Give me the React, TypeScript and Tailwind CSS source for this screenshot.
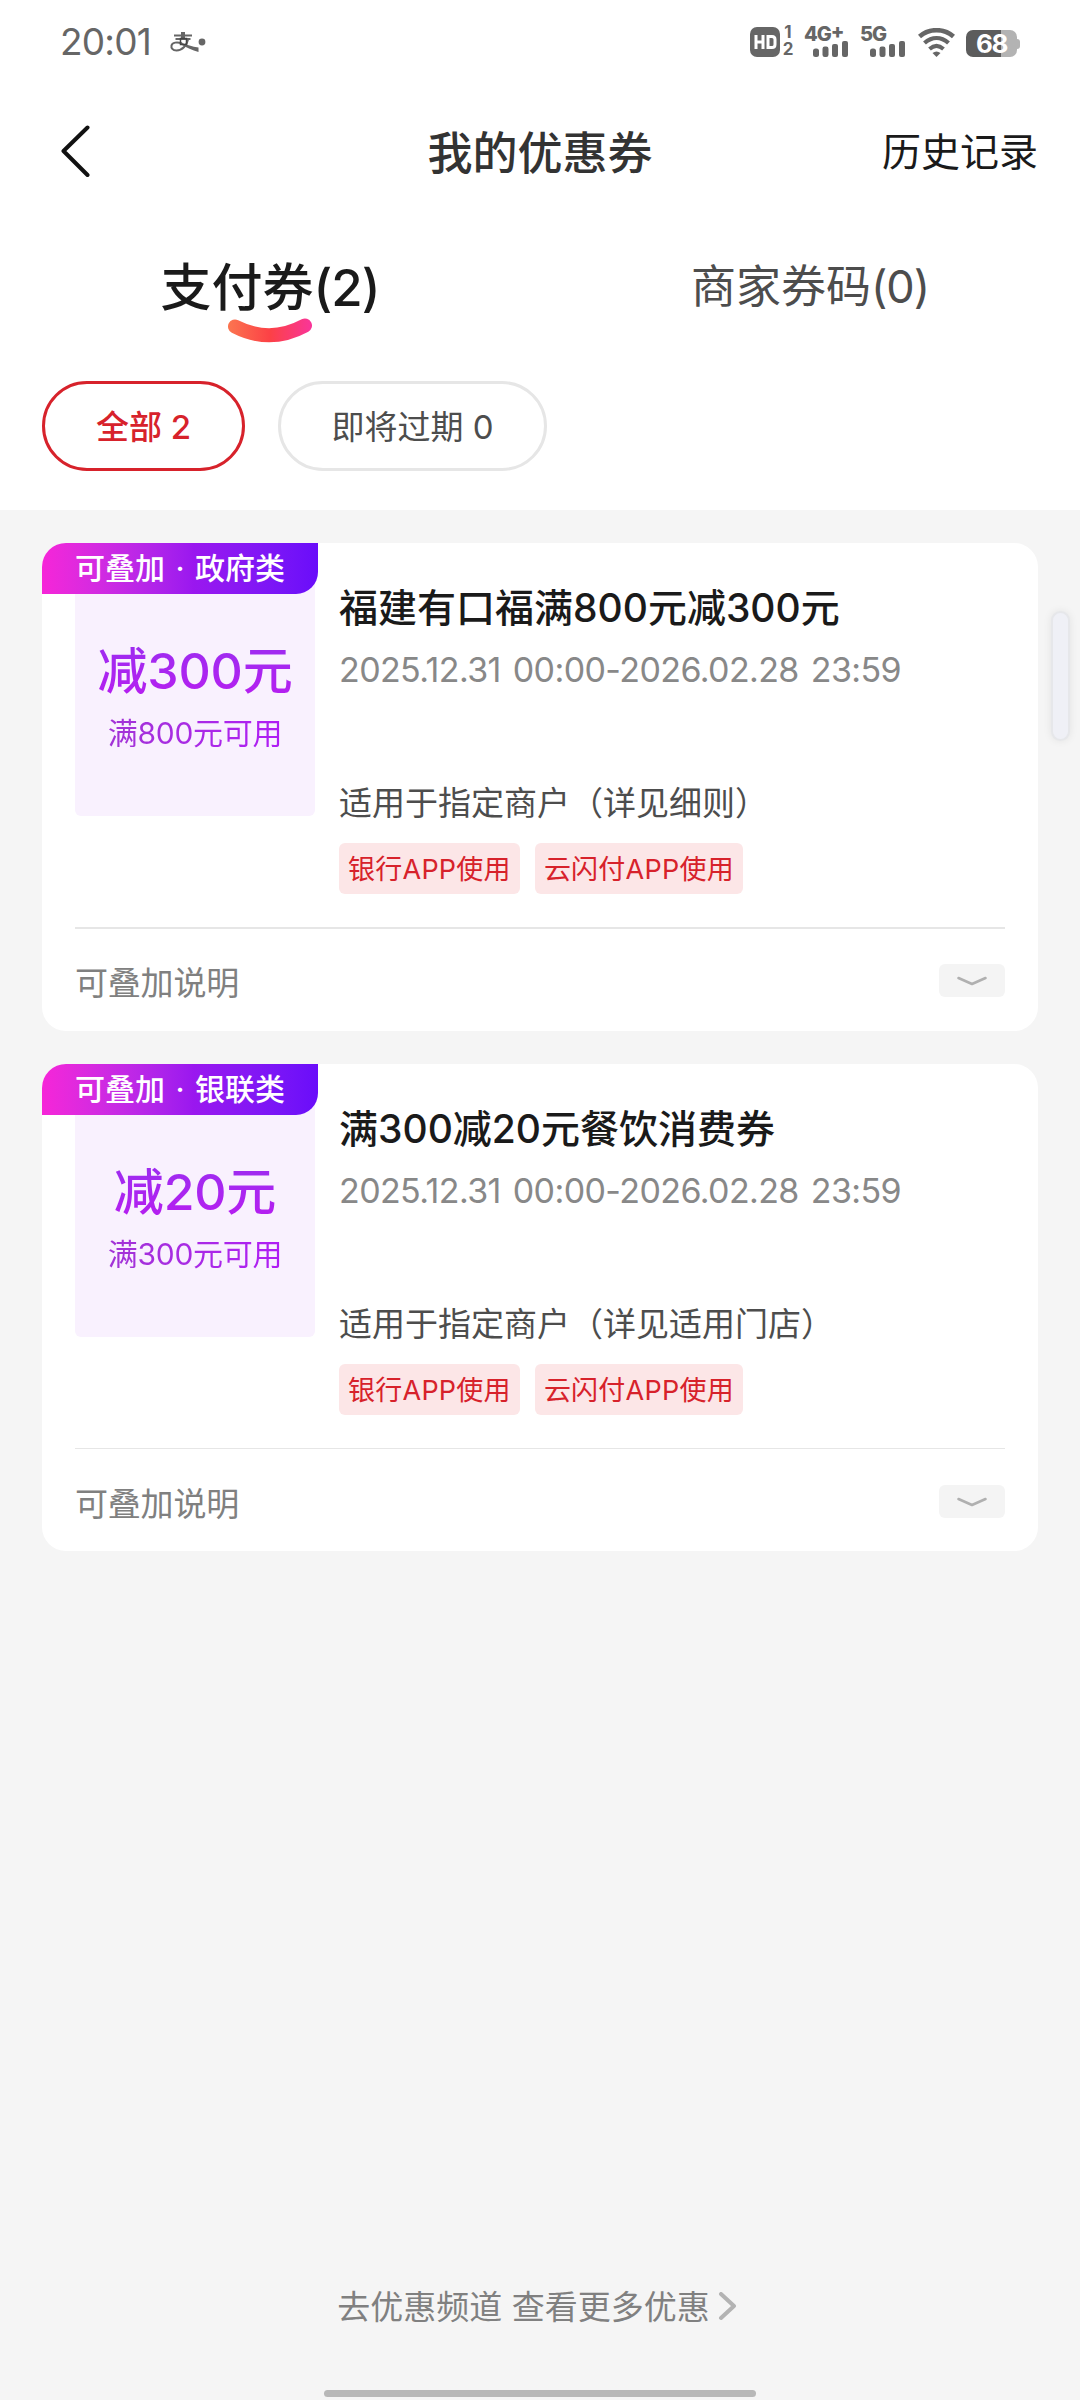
import { useState } from "react";
import clsx from "clsx";

type Coupon = {
  id: number;
  badge: string;
  amount: string;
  condition: string;
  title: string;
  period: string;
  scope: string;
  tags: string[];
};

const coupons: Coupon[] = [
  {
    id: 1,
    badge: "政府类",
    amount: "减300元",
    condition: "满800元可用",
    title: "福建有口福满800元减300元",
    period: "2025.12.31 00:00-2026.02.28 23:59",
    scope: "适用于指定商户（详见细则）",
    tags: ["银行APP使用", "云闪付APP使用"],
  },
  {
    id: 2,
    badge: "银联类",
    amount: "减20元",
    condition: "满300元可用",
    title: "满300减20元餐饮消费券",
    period: "2025.12.31 00:00-2026.02.28 23:59",
    scope: "适用于指定商户（详见适用门店）",
    tags: ["银行APP使用", "云闪付APP使用"],
  },
];

function SignalBars() {
  return (
    <svg className="block w-[35px] h-4" viewBox="0 0 35 16" fill="#666">
      <rect x="0" y="7.5" width="6" height="8.5" rx="2.5" />
      <rect x="9.5" y="5.5" width="6" height="10.5" rx="2.2" />
      <rect x="19" y="3" width="6" height="13" rx="2" />
      <rect x="29" y="0" width="6" height="16" rx="2" />
    </svg>
  );
}

function StatusBar() {
  return (
    <div className="h-[84px] px-[60px] flex items-start justify-between text-[#666]">
      <div className="flex items-start">
        <span className="mt-[22px] text-[37px] leading-10 tracking-[-0.8px] w-[92px]">20:01</span>
        <svg className="ml-[18px] mt-[30px] w-9 h-6" viewBox="0 0 36 24" fill="none" stroke="#666">
          <path d="M4 5.500h18M5.500 9h15" strokeWidth="1.800" />
          <path d="M13 2v8" strokeWidth="4" />
          <path
            d="M18 9.500C17 15 12.500 20.500 6.500 20.500C2.500 20.500 1 18 1.500 15.500C2.200 12.500 7 11.500 12 13.500"
            strokeWidth="2"
          />
          <path d="M11 12.500C17 15 22 16.500 28.500 17.500V22C22 20 17 18 11 14.500Z" fill="#666" stroke="none" />
          <path d="M10.500 8.500h6v6h-6z" stroke="#444" strokeWidth="1.500" />
          <circle cx="32" cy="12" r="3.400" fill="#666" stroke="none" />
        </svg>
      </div>
      <div className="flex items-start">
        <div className="mt-[27px] w-[30px] h-[30px] rounded-[7px] bg-[#666] flex items-center justify-center">
          <svg className="w-6 h-4" viewBox="0 0 24 16" fill="none" stroke="#fff" strokeWidth="3">
            <path d="M3 1v14M10 1v14M3 8h7" />
            <path d="M15 2.500h4q3 0 3 3v5q0 3-3 3h-4z" />
          </svg>
        </div>
        <div className="mt-[26px] ml-[2px] w-3 flex flex-col items-center text-[17px] leading-[13px] font-bold">
          <span>1</span>
          <span className="mt-[4px]">2</span>
        </div>
        <div className="ml-[10px] mt-[25px] w-[44px] flex flex-col items-end">
          <span className="w-full text-[20px] leading-[18px] h-4 font-extrabold tracking-[-1px] whitespace-nowrap">
            4G<span className="relative -top-[3px]">+</span>
          </span>
          <SignalBars />
        </div>
        <div className="ml-3 mt-[25px] w-[45px] flex flex-col items-end">
          <span className="w-full text-[20px] leading-[18px] h-4 font-extrabold tracking-[-1px]">5G</span>
          <SignalBars />
        </div>
        <svg className="ml-[13px] mt-[28px] w-[37px] h-[29px]" viewBox="0 0 37 29" fill="none" stroke="#666">
          <path d="M1.500 8.500C11 0 26 0 35.500 8.500" strokeWidth="4.500" />
          <path d="M6.500 15C14 8.500 23 8.500 30.500 15" strokeWidth="4.300" />
          <path d="M11.500 21C16 17 21 17 25.500 21" strokeWidth="4" />
          <path d="M14.500 25Q18.500 22 22.500 25L18.500 29z" fill="#666" stroke="none" />
        </svg>
        <div className="ml-[11px] mt-[30px] flex items-center">
          <div className="w-[51px] h-[27px] rounded-[7px] bg-linear-to-r from-[#5c5c5c] from-68% to-[#b3b3b3] to-68% text-white text-[26px] leading-7 font-bold tracking-[-1.5px] text-center">
            68
          </div>
          <div className="w-[3px] h-[10px] rounded-r-[3px] bg-[#b3b3b3]" />
        </div>
      </div>
    </div>
  );
}

function CouponCard({ coupon }: { coupon: Coupon }) {
  return (
    <div className="group relative h-[488px] last:h-[487px] rounded-[24px] bg-white overflow-hidden px-[33px]">
      <div className="absolute left-0 top-0 w-[276px] h-[51px] pl-[33px] rounded-br-[22px] bg-linear-to-r from-[#f625d8] via-[#9a17ef] via-55% to-[#6a0cfa] text-white text-[30px] leading-[51px] font-medium whitespace-nowrap">
        可叠加<span className="inline-block w-[30px] text-center">·</span>
        {coupon.badge}
      </div>

      <div className="flex h-[384px]">
        <div className="mt-[33px] w-60 h-60 rounded-[6px] bg-[#f9f1fe] flex flex-col items-center whitespace-nowrap">
          <div className="mt-[65px] text-[50px] leading-[60px] tracking-[-0.2px] font-medium text-transparent bg-clip-text bg-linear-to-b from-[#9b2cf0] to-[#b81cf0]">
            {coupon.amount}
          </div>
          <div className="mt-[12px] text-[30px] leading-10 tracking-[-0.3px] text-transparent bg-clip-text bg-linear-to-r from-[#a233d6] to-[#b01cf5]">
            {coupon.condition}
          </div>
        </div>

        <div className="ml-6 flex-1 whitespace-nowrap">
          <h2 className="mt-[39px] text-[39px] leading-[52px] font-medium text-[#1a1a1a]">{coupon.title}</h2>
          <p className="mt-[14px] text-[34px] leading-11 tracking-[-0.6px] [word-spacing:3px] text-[#888]">
            {coupon.period}
          </p>
          <p className="mt-[89px] text-[33px] leading-11 text-[#4d4d4d]">{coupon.scope}</p>
          <div className="mt-[18px] flex gap-[15px]">
            {coupon.tags.map((tag) => (
              <span
                key={tag}
                className="h-[51px] px-[9px] rounded-[6px] bg-[#fce6e7] text-[27px] leading-[54px] tracking-[0.25px] text-[#d7222b]"
              >
                {tag}
              </span>
            ))}
          </div>
        </div>
      </div>

      <div className="border-t-2 group-last:border-t group-last:pt-px border-[#e6e6e6] h-[104px] flex justify-between">
        <span className="mt-[32px] text-[33px] leading-11 tracking-[-0.2px] text-[#808080]">可叠加说明</span>
        <button className="mt-[35px] w-[66px] h-[33px] rounded-[6px] bg-[#f4f4f4] flex items-center justify-center">
          <svg className="w-[30px] h-[10px]" viewBox="0 0 30 10" fill="none" stroke="#b0b0b0" strokeWidth="2.500">
            <path d="M1.500 2L15 8L28.500 2" strokeLinecap="round" strokeLinejoin="round" />
          </svg>
        </button>
      </div>
    </div>
  );
}

export default function App() {
  const [filter, setFilter] = useState("all");

  return (
    <div className="relative w-[1080px] h-[2400px] overflow-hidden flex flex-col bg-[#f5f5f5] font-[Inter,'Noto_Sans_CJK_SC',sans-serif]">
      <div className="h-[510px] bg-white">
        <StatusBar />

        <header className="h-[136px] px-[42px] flex items-center justify-between">
          <div className="w-[156px] pl-[18px]">
            <svg className="w-[32px] h-[54px]" viewBox="0 0 32 54" fill="none" stroke="#111" strokeWidth="4">
              <path d="M27.500 2.500L3.500 26L27.500 50" strokeLinecap="round" strokeLinejoin="round" />
            </svg>
          </div>
          <h1 className="mt-[3px] text-[45px] leading-[60px] font-medium text-[#333]">我的优惠券</h1>
          <span className="text-[39px] leading-[52px] text-[#1a1a1a]">历史记录</span>
        </header>

        {/* Tabs */}
        <div className="h-[161px] flex">
          <div className="w-1/2 flex flex-col items-center">
            <span className="mt-[33px] text-[51px] leading-[70px] font-medium text-[#1a1a1a]">
              支付券<span className="tracking-[-1px]">(2)</span>
            </span>
            <svg className="-mt-[5px] w-[84px] h-[25px]" viewBox="0 0 84 25" fill="none">
              <defs>
                <linearGradient id="smile" x1="0" y1="0" x2="84" y2="0" gradientUnits="userSpaceOnUse">
                  <stop stopColor="#fb7550" />
                  <stop offset="0.500" stopColor="#fc4146" />
                  <stop offset="1" stopColor="#f9359a" />
                </linearGradient>
              </defs>
              <path d="M7 8.500Q42 26.500 77 7.500" stroke="url(#smile)" strokeWidth="14" strokeLinecap="round" />
            </svg>
          </div>
          <div className="w-1/2 flex justify-center">
            <span className="mt-[34px] text-[45px] leading-[66px] text-[#4d4d4d]">
              商家券码<span className="tracking-[-1px]">(0)</span>
            </span>
          </div>
        </div>

        {/* Filters */}
        <div className="px-[42px] flex gap-[33px] text-[33px]">
          <button
            onClick={() => setFilter("all")}
            className={clsx(
              "w-[203px] h-[90px] pt-[3px] rounded-full border-3",
              filter === "all" ? "border-[#d7222b] text-[#d7222b] font-medium" : "border-[#e6e6e6] text-[#4d4d4d]"
            )}
          >
            全部 2
          </button>
          <button
            onClick={() => setFilter("expiring")}
            className={clsx(
              "w-[269px] h-[90px] pt-[3px] rounded-full border-3",
              filter === "expiring" ? "border-[#d7222b] text-[#d7222b] font-medium" : "border-[#e6e6e6] text-[#4d4d4d]"
            )}
          >
            即将过期 0
          </button>
        </div>
      </div>

      <main className="px-[42px] pt-[33px] flex-1 flex flex-col gap-[33px]">
        {coupons.map((coupon) => (
          <CouponCard key={coupon.id} coupon={coupon} />
        ))}
      </main>

      <footer className="h-[116px] flex flex-col items-center">
        <div className="mt-px mr-[5px] flex items-center text-[33px] leading-11 text-[#808080]">
          去优惠频道 查看更多优惠
          <svg className="ml-2 w-[20px] h-[30px]" viewBox="0 0 20 30" fill="none" stroke="#b3b3b3" strokeWidth="4">
            <path d="M3 2L16 14L3 26" strokeLinecap="round" strokeLinejoin="round" />
          </svg>
        </div>
        <div className="mt-[61px] w-[432px] h-[7px] rounded-full bg-[#b8b8b8]" />
      </footer>

      {/* Edge panel handle */}
      <div className="absolute right-[10px] top-[611px] w-[19px] h-[130px] rounded-full border-2 border-[#e6e7ea] bg-[#eff0f6] shadow-[0_0_8px_rgba(0,0,0,0.08)]" />
    </div>
  );
}
